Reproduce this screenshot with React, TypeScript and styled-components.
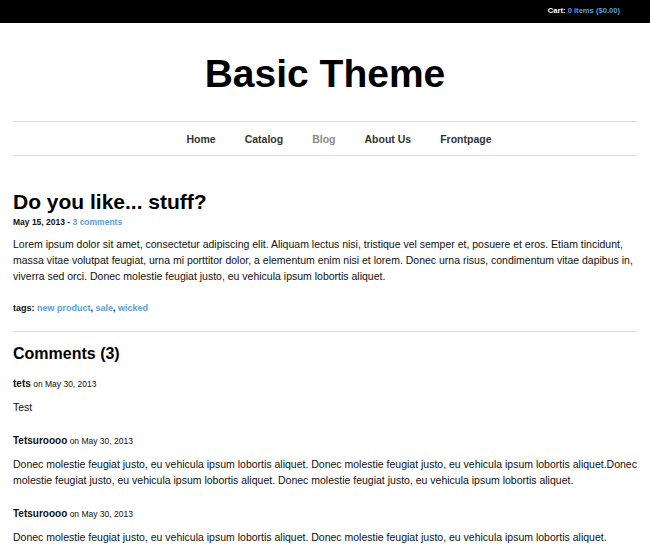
import React from 'react';
import styled, { createGlobalStyle } from 'styled-components';

const GlobalStyle = createGlobalStyle`
    body {
        margin: 0;
        background: #fff;
        font-family: "Liberation Sans", Arial, sans-serif;
        color: #111;
    }
`;

const lorem =
    'Lorem ipsum dolor sit amet, consectetur adipiscing elit. Aliquam lectus nisi, tristique vel semper et, posuere et eros. Etiam tincidunt, massa vitae volutpat feugiat, urna mi porttitor dolor, a elementum enim nisi et lorem. Donec urna risus, condimentum vitae dapibus in, viverra sed orci. Donec molestie feugiat justo, eu vehicula ipsum lobortis aliquet.';

const donec = 'Donec molestie feugiat justo, eu vehicula ipsum lobortis aliquet.';

const comments = [
    { author: 'tets', date: 'May 30, 2013', body: 'Test' },
    { author: 'Tetsuroooo', date: 'May 30, 2013', body: `${donec} ${donec}Donec molestie feugiat justo, eu vehicula ipsum lobortis aliquet. ${donec}` },
    { author: 'Tetsuroooo', date: 'May 30, 2013', body: `${donec} ${donec}` },
];

const navItems = [
    { label: 'Home', active: false },
    { label: 'Catalog', active: false },
    { label: 'Blog', active: true },
    { label: 'About Us', active: false },
    { label: 'Frontpage', active: false },
];

const App = () => {
    return (
        <>
            <GlobalStyle />
            <TopBar>
                <Cart>
                    Cart: <Link href="#">0 items ($0.00)</Link>
                </Cart>
            </TopBar>
            <Wrapper>
                <SiteTitle>Basic Theme</SiteTitle>
                <Nav>
                    {navItems.map((item) => (
                        <NavLink key={item.label} href="#" $active={item.active}>
                            {item.label}
                        </NavLink>
                    ))}
                </Nav>
                <Article>
                    <PostTitle>Do you like... stuff?</PostTitle>
                    <Meta>
                        May 15, 2013 - <Link href="#">3 comments</Link>
                    </Meta>
                    <Paragraph>{lorem}</Paragraph>
                    <Tags>
                        tags: <Link href="#">new product</Link>, <Link href="#">sale</Link>,{' '}
                        <Link href="#">wicked</Link>
                    </Tags>
                </Article>
                <CommentsSection>
                    <CommentsTitle>Comments (3)</CommentsTitle>
                    {comments.map((c, i) => (
                        <Comment key={i}>
                            <CommentHead>
                                <Author>{c.author}</Author> on {c.date}
                            </CommentHead>
                            <Paragraph>{c.body}</Paragraph>
                        </Comment>
                    ))}
                </CommentsSection>
            </Wrapper>
        </>
    );
};

export default App;

const TopBar = styled.div`
    height: 23px;
    background: #000;
    display: flex;
    justify-content: flex-end;
    align-items: center;
    padding: 0 30px;
`;

const Cart = styled.div`
    color: #fff;
    font-size: 7.6px;
    font-weight: 700;
    padding-bottom: 2px;
`;

const Link = styled.a`
    color: #5a9bd8;
    text-decoration: none;
`;

const Wrapper = styled.div`
    padding: 0 13px;
`;

const SiteTitle = styled.h1`
    margin: 0;
    padding: 27px 0 24px;
    text-align: center;
    font-size: 39px;
    line-height: 47px;
    font-weight: 700;
    color: #000;
`;

const Nav = styled.nav`
    display: flex;
    justify-content: center;
    gap: 29px;
    border-top: 1px solid #ddd;
    border-bottom: 1px solid #ddd;
    height: 33px;
    align-items: center;
    padding-left: 28px;
`;

const NavLink = styled.a<{ $active: boolean }>`
    font-size: 10.5px;
    font-weight: 700;
    color: ${(p) => (p.$active ? '#8a8a8a' : '#333')};
    text-decoration: none;
`;

const Article = styled.div`
    padding: 33px 0 18px;
    border-bottom: 1px solid #ddd;
`;

const PostTitle = styled.h2`
    margin: 0;
    font-size: 21px;
    line-height: 25px;
    font-weight: 700;
    color: #000;
`;

const Meta = styled.div`
    font-size: 8.5px;
    font-weight: 700;
    margin: 3px 0 9px;
    color: #111;
`;

const Paragraph = styled.p`
    margin: 0;
    font-size: 10.5px;
    line-height: 16px;
    color: #111;
`;

const Tags = styled.div`
    font-size: 9px;
    font-weight: 700;
    margin-top: 19px;
    color: #111;
`;

const CommentsSection = styled.div`
    padding-top: 12px;
`;

const CommentsTitle = styled.h3`
    margin: 0 0 14px;
    font-size: 16px;
    line-height: 20px;
    font-weight: 700;
    color: #000;
`;

const Comment = styled.div`
    margin-bottom: 20px;
`;

const CommentHead = styled.div`
    font-size: 8.5px;
    margin-bottom: 10px;
    color: #111;
`;

const Author = styled.span`
    font-size: 10px;
    font-weight: 700;
`;
